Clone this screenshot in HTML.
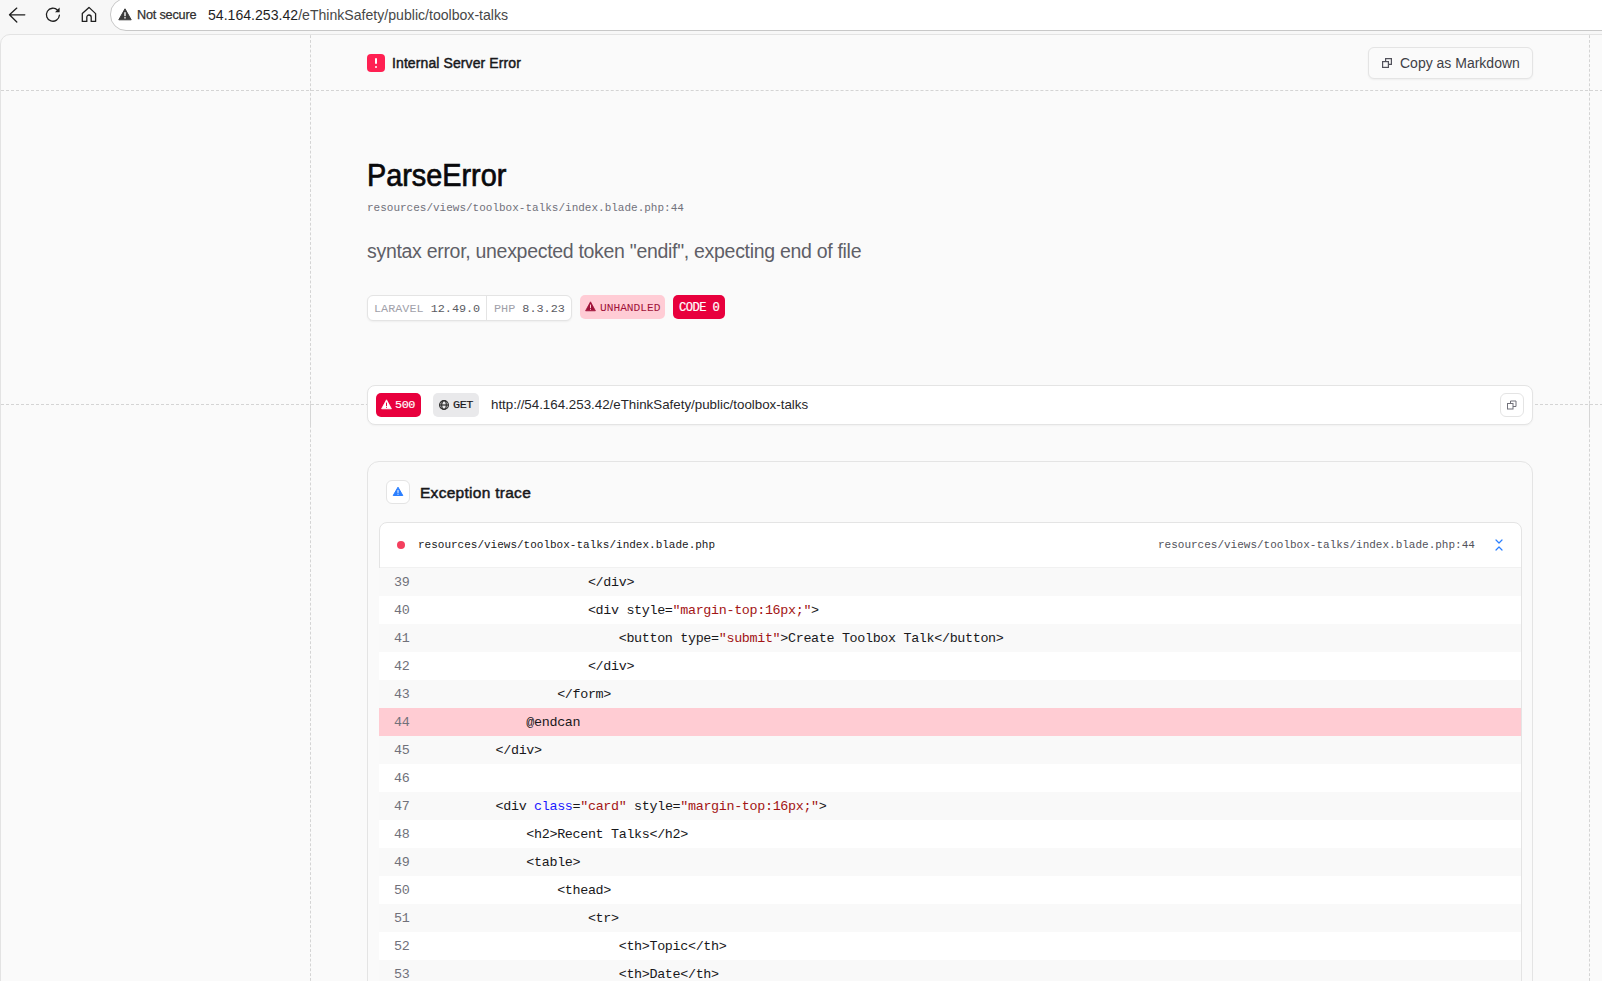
<!DOCTYPE html>
<html><head><meta charset="utf-8">
<style>
*{box-sizing:border-box;margin:0;padding:0}
html,body{width:1602px;height:981px;overflow:hidden;background:#f7f7f7;font-family:"Liberation Sans",sans-serif;position:relative}
.a{position:absolute}
.mono{font-family:"Liberation Mono",monospace}
#omni{left:110px;top:-2px;width:1520px;height:33px;background:#fff;border:1px solid #c8c8c8;border-radius:16px}
#page{left:0;top:34px;width:1640px;height:1000px;background:#fafafa;border:1px solid #e3e3e3;border-radius:10px 0 0 0}
.vd{top:35px;width:1px;height:960px;background-image:linear-gradient(#d4d4d4 60%,transparent 60%);background-size:1px 4.81px;background-position:0 0}
.hd{left:1px;height:1px;width:1601px;background-image:linear-gradient(90deg,#d4d4d4 60%,transparent 60%);background-size:5px 1px}
.sans{font-family:"Liberation Sans",sans-serif}
.card{background:#fff;border:1px solid #e4e4e4}
.row{left:379px;width:1142px;height:28px}
.ln{left:394px;font-size:13.4px;letter-spacing:-0.35px;color:#71717a;line-height:28px;margin-top:1px}
.code{margin-top:0.5px;left:434px;font-size:13.4px;letter-spacing:-0.34px;color:#18181b;line-height:28px;white-space:pre}
.s{color:#a31515}
.k{color:#1a1aff}
</style></head><body>
<!-- browser chrome -->
<svg class="a" style="left:0;top:0" width="110" height="32" viewBox="0 0 110 32">
  <g fill="none" stroke="#1f1f1f" stroke-width="1.3" stroke-linecap="round" stroke-linejoin="round">
    <path d="M16.8 8.1 L9.5 14.8 L16.8 22 M9.5 14.8 H24.8"/>
    <path d="M57.6 10.2 A6.5 6.5 0 1 0 59.4 15.2"/>
    <path d="M82.3 21.4 V13.6 L89 7.4 L95.6 13.6 V21.4 H91.2 V17.2 A2.2 2.2 0 0 0 86.8 17.2 V21.4 Z"/>
  </g>
  <path d="M55 12.2 L59.6 12.2 L59.6 7.6 Z" fill="#1f1f1f"/>
</svg>
<div id="omni" class="a"></div>
<svg class="a" style="left:118px;top:8px" width="14" height="13" viewBox="0 0 14 13">
  <path d="M7 0.8 L13.2 11.8 H0.8 Z" fill="#3c3c3c" stroke="#3c3c3c" stroke-width="1" stroke-linejoin="round"/>
  <rect x="6.3" y="4.2" width="1.4" height="4" fill="#fff"/>
  <rect x="6.3" y="9.1" width="1.4" height="1.4" fill="#fff"/>
</svg>
<div class="a" style="left:137px;top:7px;font-size:12.7px;letter-spacing:-0.2px;color:#303030;line-height:16px;-webkit-text-stroke:0.25px #303030">Not secure</div>
<div class="a" style="left:208px;top:6px;font-size:14.1px;color:#1f1f1f;line-height:18px">54.164.253.42<span style="color:#474747">/eThinkSafety/public/toolbox-talks</span></div>

<!-- page -->
<div id="page" class="a"></div>
<svg class="a" style="left:0;top:0" width="1602" height="981"><g stroke="#d4d4d4" stroke-width="1" stroke-dasharray="2.9 1.91"><line x1="310.5" y1="35.2" x2="310.5" y2="981"/><line x1="1589.5" y1="35.2" x2="1589.5" y2="981"/></g></svg>
<svg class="a" style="left:0;top:0" width="1602" height="981"><g stroke="#d4d4d4" stroke-width="1">
<g stroke-dasharray="3 2"><line x1="1" y1="90.5" x2="310" y2="90.5"/><line x1="1590" y1="90.5" x2="1602" y2="90.5"/><line x1="1" y1="404.5" x2="310" y2="404.5"/><line x1="1590" y1="404.5" x2="1602" y2="404.5"/></g>
<g stroke-dasharray="2.998 1.998"><line x1="311" y1="90.5" x2="1589" y2="90.5"/><line x1="311" y1="404.5" x2="1589" y2="404.5"/></g>
</g></svg>
<div class="a" style="left:310px;top:404px;width:1px;height:23px;background:#d6d6d6"></div>
<div class="a" style="left:1589px;top:404px;width:1px;height:23px;background:#d6d6d6"></div>

<!-- header -->
<div class="a" style="left:367px;top:54px;width:18px;height:18px;border-radius:4px;background:#ff2052"></div>
<div class="a" style="left:375px;top:58px;width:2px;height:6px;background:#fff;border-radius:1px"></div>
<div class="a" style="left:375px;top:66px;width:2px;height:2px;background:#fff;border-radius:1px"></div>
<div class="a" style="left:392px;top:54px;font-size:14px;letter-spacing:0.1px;color:#18181b;-webkit-text-stroke:0.45px #18181b;line-height:18px">Internal Server Error</div>

<div class="a" style="left:1368px;top:47px;width:165px;height:32px;border:1px solid #e4e4e4;border-radius:6px;background:#fafafa;box-shadow:0 1px 2px rgba(0,0,0,.05)"></div>
<svg class="a" style="left:1381px;top:57px" width="12" height="12" viewBox="0 0 12 12"><g fill="none" stroke="#52525b" stroke-width="1.2"><rect x="1.6" y="4.6" width="5.8" height="5.8"/><path d="M4.6 4.6 V1.6 H10.4 V7.4 H7.4"/></g></svg>
<div class="a" style="left:1400px;top:54px;font-size:14px;color:#3f3f46;line-height:18px">Copy as Markdown</div>

<!-- title -->
<div class="a" style="left:367px;top:158px;font-size:30.5px;color:#09090b;-webkit-text-stroke:0.7px #09090b;line-height:34px;transform:scaleX(0.945);transform-origin:0 0">ParseError</div>
<div class="a mono" style="left:367px;top:200px;font-size:11px;color:#71717a;line-height:16px">resources/views/toolbox-talks/index.blade.php:44</div>
<div class="a" style="left:367px;top:238px;font-size:19.5px;letter-spacing:-0.3px;color:#5f5f67;line-height:24px;margin-top:0.5px">syntax error, unexpected token "endif", expecting end of file</div>

<!-- badges -->
<div class="a card" style="left:367px;top:295px;width:205px;height:26px;border-radius:6px;box-shadow:0 1px 2px rgba(0,0,0,.05)"></div>
<div class="a" style="left:486px;top:296px;width:1px;height:24px;background:#e4e4e4"></div>
<div class="a mono" style="left:374px;top:300.5px;font-size:11.8px;line-height:16px;color:#a1a1aa">LARAVEL <span style="color:#5b5b63">12.49.0</span></div>
<div class="a mono" style="left:494px;top:300.5px;font-size:11.8px;line-height:16px;color:#a1a1aa">PHP <span style="color:#5b5b63">8.3.23</span></div>
<div class="a" style="left:580px;top:295px;width:85px;height:24px;border-radius:5px;background:#ffccd5"></div>
<svg class="a" style="left:585px;top:301px" width="11" height="11" viewBox="0 0 11 11"><path d="M5.5 0.8 L10.4 9.8 H0.6 Z" fill="#9f1239" stroke="#9f1239" stroke-width=".8" stroke-linejoin="round"/><rect x="5" y="3.6" width="1" height="3.4" fill="#ffccd5"/><rect x="5" y="7.8" width="1" height="1" fill="#ffccd5"/></svg>
<div class="a mono" style="left:600px;top:300px;font-size:11.2px;line-height:16px;color:#9f1239">UNHANDLED</div>
<div class="a" style="left:673px;top:295px;width:52px;height:24px;border-radius:5px;background:#e8003d"></div>
<div class="a mono" style="left:679px;top:299.5px;font-size:12.2px;letter-spacing:-0.6px;line-height:16px;color:#fff;-webkit-text-stroke:0.2px #fff">CODE 0</div>

<!-- url bar -->
<div class="a card" style="left:367px;top:385px;width:1166px;height:40px;border-radius:8px;box-shadow:0 1px 2px rgba(0,0,0,.04)"></div>
<div class="a" style="left:376px;top:393px;width:45px;height:24px;border-radius:5px;background:#e8003d"></div>
<svg class="a" style="left:381px;top:399px" width="11" height="11" viewBox="0 0 11 11"><path d="M5.5 0.8 L10.4 9.8 H0.6 Z" fill="#fff" stroke="#fff" stroke-width=".8" stroke-linejoin="round"/><rect x="5" y="3.6" width="1" height="3.4" fill="#e8003d"/><rect x="5" y="7.8" width="1" height="1" fill="#e8003d"/></svg>
<div class="a mono" style="left:395px;top:397px;font-size:11.8px;letter-spacing:-0.45px;line-height:16px;color:#fff;-webkit-text-stroke:0.15px #fff">500</div>
<div class="a" style="left:433px;top:393px;width:46px;height:24px;border-radius:5px;background:#e9e9eb"></div>
<svg class="a" style="left:438px;top:399px" width="12" height="12" viewBox="0 0 12 12"><g fill="none" stroke="#333" stroke-width="1.25"><circle cx="6" cy="6" r="4.4"/><ellipse cx="6" cy="6" rx="2.3" ry="4.4"/><path d="M1.6 6 H10.4"/></g></svg>
<div class="a mono" style="left:453px;top:397px;font-size:11.8px;letter-spacing:-0.45px;line-height:16px;color:#18181b;-webkit-text-stroke:0.2px #18181b">GET</div>
<div class="a" style="left:491px;top:396px;font-size:13.33px;line-height:18px;color:#27272a">http://54.164.253.42/eThinkSafety/public/toolbox-talks</div>
<div class="a" style="left:1500px;top:393px;width:24px;height:24px;border:1px solid #e4e4e4;border-radius:6px;background:#fff"></div>
<svg class="a" style="left:1506px;top:399px" width="12" height="12" viewBox="0 0 12 12"><g fill="none" stroke="#71717a" stroke-width="1"><rect x="1.5" y="4.5" width="5.5" height="5.5"/><path d="M4.5 4.5 V2 H10 V7.5 H7"/></g></svg>

<!-- exception trace card -->
<div class="a" style="left:367px;top:461px;width:1166px;height:600px;border:1px solid #e4e4e4;border-radius:12px;background:#fafafa"></div>
<div class="a card" style="left:386px;top:480px;width:24px;height:24px;border-radius:6px"></div>
<svg class="a" style="left:392px;top:486px" width="12" height="12" viewBox="0 0 12 12"><path d="M6 1.2 L10.8 9.5 H1.2 Z" fill="#2b7fff" stroke="#2b7fff" stroke-width="1" stroke-linejoin="round"/><rect x="5.4" y="3.9" width="1.2" height="3" fill="#fff" opacity=".8"/><rect x="5.4" y="7.7" width="1.2" height="1" fill="#fff" opacity=".8"/></svg>
<div class="a" style="left:420px;top:484px;font-size:15.5px;letter-spacing:0.28px;color:#18181b;-webkit-text-stroke:0.5px #18181b;line-height:18px">Exception trace</div>

<div class="a" style="left:379px;top:522px;width:1143px;height:600px;border:1px solid #e4e4e4;border-radius:8px;background:#fff;overflow:hidden">
</div>
<div class="a" style="left:397px;top:541px;width:8px;height:8px;border-radius:4px;background:#f43f5e"></div>
<div class="a mono" style="left:418px;top:537px;font-size:11px;line-height:16px;color:#18181b">resources/views/toolbox-talks/index.blade.php</div>
<div class="a mono" style="left:1158px;top:537px;font-size:11px;line-height:16px;color:#52525b">resources/views/toolbox-talks/index.blade.php:44</div>
<svg class="a" style="left:1493px;top:538px" width="12" height="14" viewBox="0 0 12 14"><g fill="none" stroke="#2b7fff" stroke-width="1.2" stroke-linecap="round" stroke-linejoin="round"><path d="M3 2 L6 5 L9 2"/><path d="M3 12 L6 9 L9 12"/></g></svg>

<div class="a" style="left:380px;top:567px;width:1141px;height:1px;background:#f1f1f1"></div>
<div id="rows">
<div class="a row" style="top:568px;background:#f9f9f9"></div>
<div class="a mono ln" style="top:568px">39</div>
<div class="a mono code" style="top:568px">                    &lt;/div&gt;</div>
<div class="a row" style="top:596px;background:#ffffff"></div>
<div class="a mono ln" style="top:596px">40</div>
<div class="a mono code" style="top:596px">                    &lt;div style=<span class="s">"margin-top:16px;"</span>&gt;</div>
<div class="a row" style="top:624px;background:#f9f9f9"></div>
<div class="a mono ln" style="top:624px">41</div>
<div class="a mono code" style="top:624px">                        &lt;button type=<span class="s">"submit"</span>&gt;Create Toolbox Talk&lt;/button&gt;</div>
<div class="a row" style="top:652px;background:#ffffff"></div>
<div class="a mono ln" style="top:652px">42</div>
<div class="a mono code" style="top:652px">                    &lt;/div&gt;</div>
<div class="a row" style="top:680px;background:#f9f9f9"></div>
<div class="a mono ln" style="top:680px">43</div>
<div class="a mono code" style="top:680px">                &lt;/form&gt;</div>
<div class="a row" style="top:708px;background:#ffccd3"></div>
<div class="a mono ln" style="top:708px">44</div>
<div class="a mono code" style="top:708px">            @endcan</div>
<div class="a row" style="top:736px;background:#f9f9f9"></div>
<div class="a mono ln" style="top:736px">45</div>
<div class="a mono code" style="top:736px">        &lt;/div&gt;</div>
<div class="a row" style="top:764px;background:#ffffff"></div>
<div class="a mono ln" style="top:764px">46</div>
<div class="a mono code" style="top:764px"></div>
<div class="a row" style="top:792px;background:#f9f9f9"></div>
<div class="a mono ln" style="top:792px">47</div>
<div class="a mono code" style="top:792px">        &lt;div <span class="k">class</span>=<span class="s">"card"</span> style=<span class="s">"margin-top:16px;"</span>&gt;</div>
<div class="a row" style="top:820px;background:#ffffff"></div>
<div class="a mono ln" style="top:820px">48</div>
<div class="a mono code" style="top:820px">            &lt;h2&gt;Recent Talks&lt;/h2&gt;</div>
<div class="a row" style="top:848px;background:#f9f9f9"></div>
<div class="a mono ln" style="top:848px">49</div>
<div class="a mono code" style="top:848px">            &lt;table&gt;</div>
<div class="a row" style="top:876px;background:#ffffff"></div>
<div class="a mono ln" style="top:876px">50</div>
<div class="a mono code" style="top:876px">                &lt;thead&gt;</div>
<div class="a row" style="top:904px;background:#f9f9f9"></div>
<div class="a mono ln" style="top:904px">51</div>
<div class="a mono code" style="top:904px">                    &lt;tr&gt;</div>
<div class="a row" style="top:932px;background:#ffffff"></div>
<div class="a mono ln" style="top:932px">52</div>
<div class="a mono code" style="top:932px">                        &lt;th&gt;Topic&lt;/th&gt;</div>
<div class="a row" style="top:960px;background:#f9f9f9"></div>
<div class="a mono ln" style="top:960px">53</div>
<div class="a mono code" style="top:960px">                        &lt;th&gt;Date&lt;/th&gt;</div>
</div>
</body></html>
